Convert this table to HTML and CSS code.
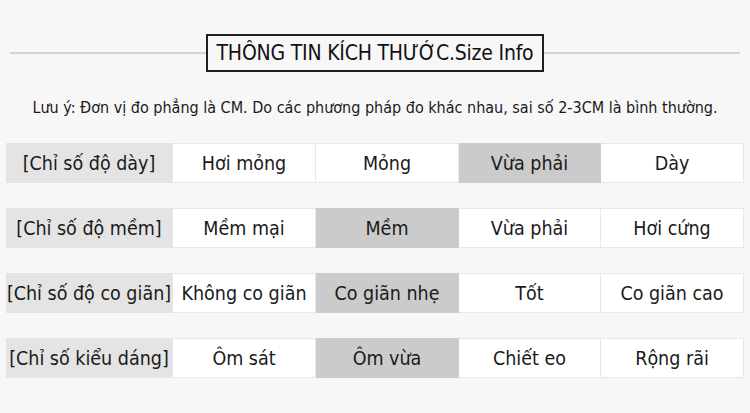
FILE: index.html
```html
<!DOCTYPE html>
<html lang="vi">
<head>
<meta charset="utf-8">
<link rel="stylesheet" href="styles.css">
</head>
<body>
<div class="page">
  <div class="heading">
    <span class="rule"></span>
    <h1 class="title">THÔNG TIN KÍCH THƯỚC.Size Info</h1>
    <span class="rule"></span>
  </div>
  <p class="note">Lưu ý: Đơn vị đo phẳng là CM. Do các phương pháp đo khác nhau, sai số 2-3CM là bình thường.</p>
  <div class="rows">
    <div class="row">
      <div class="cell label">[Chỉ số độ dày]</div>
      <div class="cell">Hơi mỏng</div>
      <div class="cell">Mỏng</div>
      <div class="cell on">Vừa phải</div>
      <div class="cell">Dày</div>
    </div>
    <div class="row">
      <div class="cell label">[Chỉ số độ mềm]</div>
      <div class="cell">Mềm mại</div>
      <div class="cell on">Mềm</div>
      <div class="cell">Vừa phải</div>
      <div class="cell">Hơi cứng</div>
    </div>
    <div class="row">
      <div class="cell label">[Chỉ số độ co giãn]</div>
      <div class="cell">Không co giãn</div>
      <div class="cell on">Co giãn nhẹ</div>
      <div class="cell">Tốt</div>
      <div class="cell">Co giãn cao</div>
    </div>
    <div class="row">
      <div class="cell label">[Chỉ số kiểu dáng]</div>
      <div class="cell">Ôm sát</div>
      <div class="cell on">Ôm vừa</div>
      <div class="cell">Chiết eo</div>
      <div class="cell">Rộng rãi</div>
    </div>
  </div>
</div>
</body>
</html>
```
FILE: styles.css
```css
html, body {
  margin: 0;
  padding: 0;
  background: #f7f7f7;
}
body {
  width: 750px;
  height: 413px;
  overflow: hidden;
  font-family: "DejaVu Sans Condensed", "DejaVu Sans", sans-serif;
  color: #1a1a1a;
}
.page {
  padding-top: 34px;
}
.heading {
  display: flex;
  align-items: center;
  padding: 0 10px;
}
.rule {
  flex: 1;
  height: 2px;
  background: #d4d4d4;
}
.title {
  margin: 0;
  box-sizing: border-box;
  width: 338px;
  height: 38px;
  border: 2px solid #1e1e1e;
  display: flex;
  align-items: center;
  justify-content: center;
  font-weight: normal;
  font-size: 21px;
  letter-spacing: -0.2px;
  color: #111;
}
.note {
  margin: 26px 0 0;
  text-align: center;
  font-size: 16px;
  line-height: 20px;
}
.rows {
  margin-top: 25px;
  display: flex;
  flex-direction: column;
  gap: 25px;
  padding-left: 6px;
}
.row {
  display: grid;
  grid-template-columns: 167px 143px 143px 142px 143px;
  height: 40px;
}
.cell {
  box-sizing: border-box;
  display: flex;
  align-items: center;
  justify-content: center;
  background: #ffffff;
  border: 1px solid #e8e8e8;
  border-left: none;
  font-size: 19.5px;
  white-space: nowrap;
}
.cell.label {
  background: #e4e4e4;
  border-color: #e4e4e4;
}
.cell.on {
  background: #cbcbcb;
  border-color: #cbcbcb;
}
```
